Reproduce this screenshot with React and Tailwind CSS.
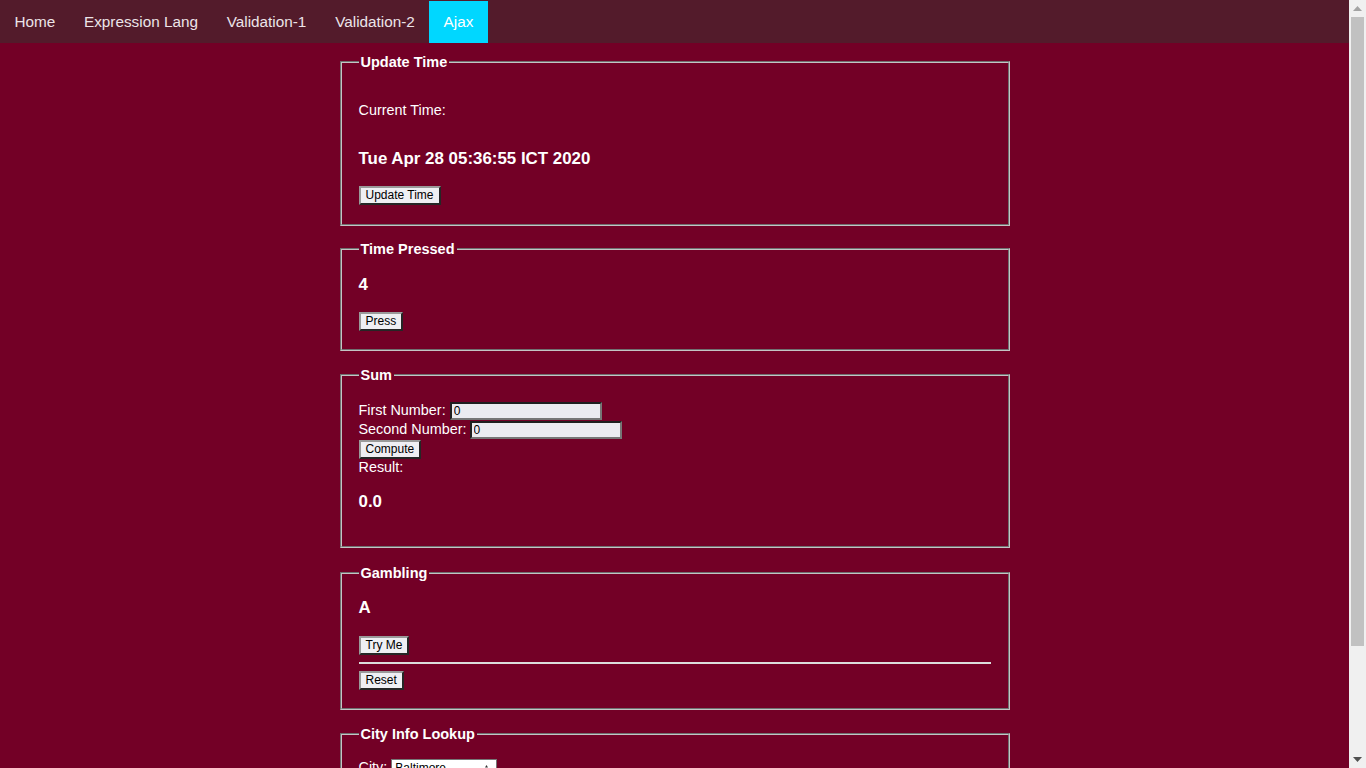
const navItems = ['Home', 'Expression Lang', 'Validation-1', 'Validation-2', 'Ajax'];

function Fieldset({ title, className = '', children }) {
  return (
    <fieldset
      className={`mx-auto w-[670px] border-2 border-[#c4c4c4] [border-style:groove] px-[17px] ${className}`}
    >
      <legend className="px-[2px] text-[14.5px] font-bold leading-[16px] text-white">{title}</legend>
      {children}
    </fieldset>
  );
}

function Button({ children }) {
  return (
    <button className="border-2 border-t-[#9a9a9a] border-l-[#9a9a9a] border-r-[#262626] border-b-[#262626] bg-[#efeff3] px-[5px] py-px text-[12px] leading-[13px] text-black">
      {children}
    </button>
  );
}

function NumberInput({ className = '' }) {
  return (
    <input
      type="text"
      defaultValue="0"
      className={`h-[18px] w-[152px] border-2 border-t-[#1f1f1f] border-l-[#1f1f1f] border-r-[#767676] border-b-[#767676] bg-[#ebebf0] px-[2px] text-[12px] leading-[14px] text-black outline-none ${className}`}
    />
  );
}

// browser scrollbar as seen in the screenshot
function Scrollbar() {
  return (
    <div className="flex h-screen w-[17px] shrink-0 flex-col items-center bg-[#f0f0f0]">
      <div className="flex h-[17px] w-full items-center justify-center">
        <svg width="9" height="5" viewBox="0 0 9 5">
          <path d="M0 5 L4.5 0 L9 5 Z" fill="#a3a3a3" />
        </svg>
      </div>
      <div className="h-[629px] w-[13px] bg-[#c1c1c1]" />
      <div className="flex-1" />
      <div className="flex h-[17px] w-full items-center justify-center">
        <svg width="9" height="5" viewBox="0 0 9 5">
          <path d="M0 0 L9 0 L4.5 5 Z" fill="#505050" />
        </svg>
      </div>
    </div>
  );
}

export default function App() {
  return (
    <div className="flex h-screen overflow-hidden font-['Liberation_Sans',Arial,sans-serif] text-white">
      <div className="flex-1 overflow-hidden bg-[#730026] pb-[16px]">
        {/* Top navigation */}
        <nav className="flex h-[43px] bg-[#531b2b] pt-px">
          {navItems.map((item) => (
            <a
              key={item}
              className={`flex items-center px-[14.4px] text-[15.3px] ${
                item === 'Ajax' ? 'bg-[#00d7ff] text-white' : 'text-[#ece4e8]'
              }`}
            >
              {item}
            </a>
          ))}
        </nav>

        {/* Update Time */}
        <Fieldset title="Update Time" className="mt-[11px] pb-[19px]">
          <p className="mt-[32px] text-[14.4px] leading-[16px]">Current Time:</p>
          <h3 className="mt-[31px] text-[16.9px] font-bold leading-[19px]">Tue Apr 28 05:36:55 ICT 2020</h3>
          <div className="mt-[18px] flex">
            <Button>Update Time</Button>
          </div>
        </Fieldset>

        {/* Time Pressed */}
        <Fieldset title="Time Pressed" className="mt-[15px] pb-[18px]">
          <h3 className="mt-[18px] text-[16.9px] font-bold leading-[19px]">4</h3>
          <div className="mt-[18px] flex">
            <Button>Press</Button>
          </div>
        </Fieldset>

        {/* Sum */}
        <Fieldset title="Sum" className="mt-[16px] pb-[35px]">
          <div className="mt-[18px] text-[14.4px]">
            <div className="flex h-[19px] items-center">
              <span>First Number:</span>
              <NumberInput className="ml-[4px]" />
            </div>
            <div className="flex h-[20px] items-center">
              <span>Second Number:</span>
              <NumberInput className="ml-[3px]" />
            </div>
            <div className="flex h-[19px] items-center">
              <Button>Compute</Button>
            </div>
            <div className="flex h-[17px] items-center">Result:</div>
          </div>
          <h3 className="mt-[16px] text-[16.9px] font-bold leading-[19px]">0.0</h3>
        </Fieldset>

        {/* Gambling */}
        <Fieldset title="Gambling" className="mt-[17px] pb-[18px]">
          <h3 className="mt-[17px] text-[16.9px] font-bold leading-[19px]">A</h3>
          <div className="mt-[19px] flex">
            <Button>Try Me</Button>
          </div>
          <hr className="mt-[7px] h-[2px] border-0 bg-[#dcdcdc]" />
          <div className="mt-[7px] flex">
            <Button>Reset</Button>
          </div>
        </Fieldset>

        {/* City Info Lookup */}
        <Fieldset title="City Info Lookup" className="mt-[16px] pb-[100px]">
          <div className="mt-[16px] flex h-[20px] items-center text-[14.4px]">
            City:
            <div className="ml-[4px] flex h-[18px] w-[106px] items-center justify-between border border-[#767676] bg-white pl-[3px] pr-[2px] text-[12px] text-black">
              <span>Baltimore</span>
              <svg width="10" height="8" viewBox="0 0 10 8" fill="#333">
                <path d="M1 3.5 L2.5 1 L4 3.5 Z" />
                <path d="M6 4.5 L7.5 7 L9 4.5 Z" />
              </svg>
            </div>
          </div>
        </Fieldset>
      </div>
      <Scrollbar />
    </div>
  );
}
